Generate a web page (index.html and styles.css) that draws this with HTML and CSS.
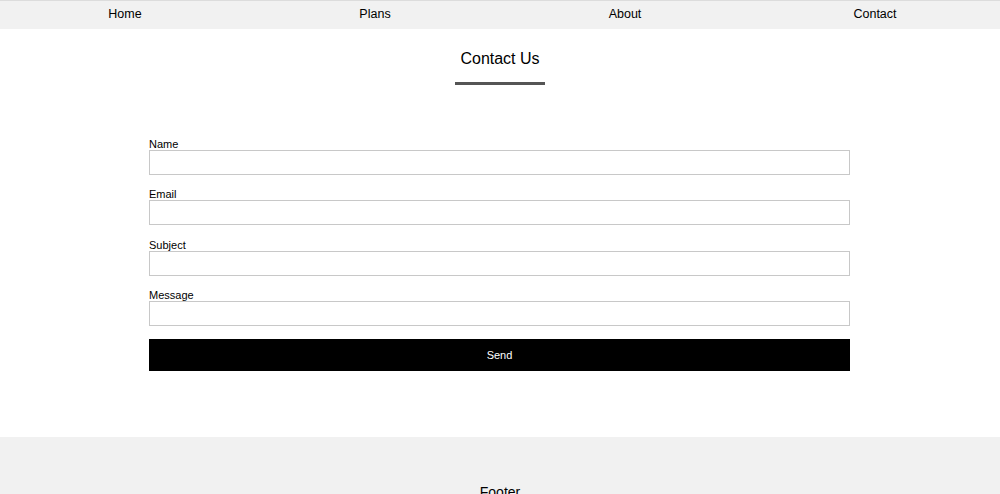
FILE: index.html
```html
<!DOCTYPE html>
<html lang="en">
<head>
<meta charset="utf-8">
<title>Contact Us</title>
<link rel="stylesheet" href="styles.css">
</head>
<body>
<nav class="nav">
  <a class="nav-link" href="#">Home</a>
  <a class="nav-link" href="#">Plans</a>
  <a class="nav-link" href="#">About</a>
  <a class="nav-link" href="#">Contact</a>
</nav>
<main class="main">
  <h1 class="title">Contact Us</h1>
  <div class="title-bar"></div>
  <form class="form">
    <div class="field">
      <label class="label" for="name">Name</label>
      <input class="input" id="name" type="text">
    </div>
    <div class="field">
      <label class="label" for="email">Email</label>
      <input class="input" id="email" type="text">
    </div>
    <div class="field">
      <label class="label" for="subject">Subject</label>
      <input class="input" id="subject" type="text">
    </div>
    <div class="field">
      <label class="label" for="message">Message</label>
      <input class="input" id="message" type="text">
    </div>
    <button class="send" type="button">Send</button>
  </form>
</main>
<footer class="footer">Footer</footer>
</body>
</html>
```
FILE: styles.css
```css
* { box-sizing: border-box; }
html, body { margin: 0; padding: 0; }
body {
  font-family: "Liberation Sans", Arial, sans-serif;
  color: #000;
  background: #fff;
}
.nav {
  display: grid;
  grid-template-columns: repeat(4, 1fr);
  height: 29px;
  background: #f1f1f1;
  border-top: 1px solid #dcdcdc;
}
.nav-link {
  text-align: center;
  color: #000;
  text-decoration: none;
  font-size: 12.5px;
  line-height: 26px;
}
.main {
  padding-top: 20px;
  padding-bottom: 66px;
}
.title {
  margin: 0;
  text-align: center;
  font-size: 16px;
  font-weight: normal;
  line-height: 20px;
}
.title-bar {
  width: 90px;
  height: 3px;
  background: #555;
  margin: 13px auto 0;
}
.form {
  display: flex;
  flex-direction: column;
  gap: 12.34px;
  margin: 52px 150px 0 149px;
}
.field {
  display: flex;
  flex-direction: column;
}
.label {
  font-size: 11px;
  line-height: 13px;
  padding-top: 1px;
  margin-bottom: -1px;
}
.input {
  height: 25px;
  border: 1px solid #c8c8c8;
  margin: 0;
  padding: 0 4px;
  font: inherit;
}
.send {
  margin-top: 1px;
  height: 32px;
  background: #000;
  color: #fff;
  border: 0;
  font-family: inherit;
  font-size: 11px;
}
.footer {
  background: #f1f1f1;
  text-align: center;
  font-size: 14px;
  line-height: 16px;
  padding: 47px 0 40px;
  height: 120px;
}
```
